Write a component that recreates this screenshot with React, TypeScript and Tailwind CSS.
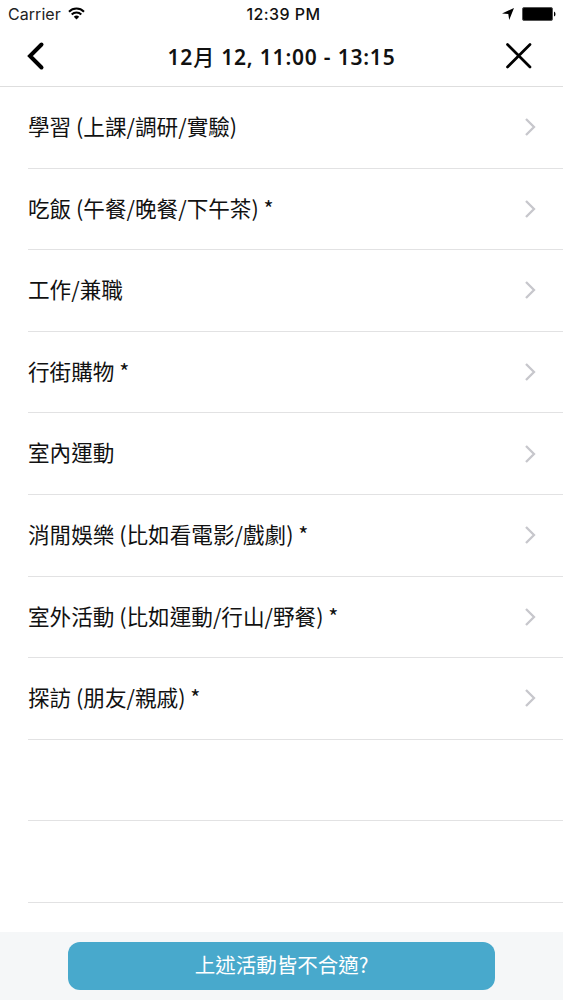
const rows = [
  '學習 (上課/調研/實驗)',
  '吃飯 (午餐/晚餐/下午茶) *',
  '工作/兼職',
  '行街購物 *',
  '室內運動',
  '消閒娛樂 (比如看電影/戲劇) *',
  '室外活動 (比如運動/行山/野餐) *',
  '探訪 (朋友/親戚) *',
  '',
  '',
];

export default function App() {
  return (
    <div className="flex h-[1000px] w-[563px] flex-col overflow-hidden bg-white font-['Noto_Sans_CJK_TC',sans-serif] text-[#111]">
      <div className="grid h-[28px] shrink-0 grid-cols-3 items-center pl-2 pr-[7px] font-[Inter,sans-serif] text-[16px]">
        <div className="flex items-center gap-[7px] text-[#222]">
          <span className="tracking-[0.05px]">Carrier</span>
          <svg className="-mt-0.5" width="17" height="13" viewBox="0 0 17 13" fill="none" stroke="#000" strokeWidth="2">
            <path d="M1 4.7a10.6 10.6 0 0 1 15 0M3.7 7.5a6.8 6.8 0 0 1 9.6 0" />
            <path d="M8.5 12.5 5.8 9.8a3.8 3.8 0 0 1 5.4 0Z" fill="#000" stroke="none" />
          </svg>
        </div>
        <div className="pl-[3px] text-center font-medium tracking-[0.45px] whitespace-nowrap">12:39 PM</div>
        <div className="flex items-center justify-end gap-2">
          <svg width="12" height="12" viewBox="0 0 12 12"><path d="M12 0 7.2 12 6.3 6.1 0 5.5Z" /></svg>
          <svg width="34" height="14" viewBox="0 0 34 14">
            <rect x=".5" y=".5" width="30" height="13" rx="1.5" fill="#000" stroke="#555" />
            <path d="M32 4.5q1.5.5 1.5 2.5T32 9.5Z" />
          </svg>
        </div>
      </div>
      <header className="grid h-[59px] shrink-0 grid-cols-[80px_1fr_80px] items-center border-b border-[#dedede]">
        <svg className="-mt-0.5 ml-[26px]" width="20" height="30" viewBox="0 0 20 30" fill="none" stroke="#000" strokeWidth="4" strokeLinecap="round"><path d="M15.5 3.5 4 15l11.5 11.5" /></svg>
        <h1 className="pt-[2px] text-center font-['Noto_Sans','Noto_Sans_CJK_TC',sans-serif] text-[21px] font-semibold tracking-[0.8px] whitespace-nowrap">12<span className="font-medium">月</span> 12, 11:00 - 13:15</h1>
        <svg className="-mt-[3px] ml-[22px]" width="28" height="28" viewBox="0 0 28 28" fill="none" stroke="#000" strokeWidth="2.7" strokeLinecap="round"><path d="m2.5 2.5 22.5 22.5M25 2.5 2.5 25" /></svg>
      </header>
      <main className="flex-1 overflow-hidden pl-[28px]">
        {rows.map((label, i) => (
          <div key={i} className="flex h-[81.6px] items-center justify-between border-b border-[#e2e2e3] pr-[27px] text-[21.6px]">
            <span className="pb-[2px] whitespace-nowrap">{label}</span>
            {label && (
              <svg width="11" height="18" viewBox="0 0 11 18" fill="none" stroke="#c7c7cc" strokeWidth="2.3"><path d="m1 1 8 8-8 8" /></svg>
            )}
          </div>
        ))}
      </main>
      <footer className="flex h-[68px] shrink-0 justify-center bg-[#f5f7f8] pt-[10px]">
        <button className="h-[48px] w-[427px] rounded-[12px] bg-[#48a9cc] pb-[3px] text-[20.5px] text-white">上述活動皆不合適?</button>
      </footer>
    </div>
  );
}
